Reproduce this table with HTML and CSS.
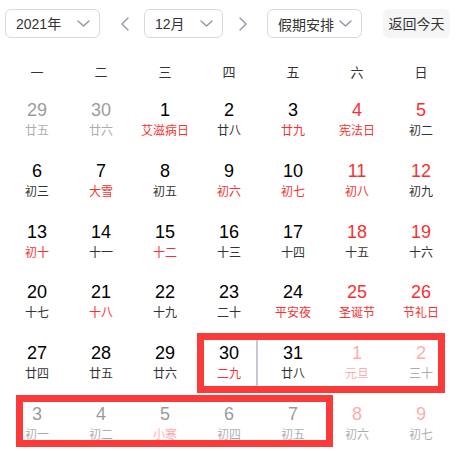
FILE: index.html
```html
<!DOCTYPE html>
<html lang="zh-CN">
<head>
<meta charset="utf-8">
<title>万年历</title>
<link rel="stylesheet" href="styles.css">
</head>
<body>
<div class="cal">
  <div class="toolbar">
    <div class="select year"><span>2021年</span><svg class="chev" width="13" height="7" viewBox="0 0 13 7"><path d="M1 1 L6.5 6 L12 1" /></svg></div>
    <div class="arrow prev"><svg width="8" height="14" viewBox="0 0 8 14"><path d="M7 1 L1 7 L7 13" /></svg></div>
    <div class="select month"><span>12月</span><svg class="chev" width="13" height="7" viewBox="0 0 13 7"><path d="M1 1 L6.5 6 L12 1" /></svg></div>
    <div class="arrow next"><svg width="8" height="14" viewBox="0 0 8 14"><path d="M1 1 L7 7 L1 13" /></svg></div>
    <div class="select holiday"><span>假期安排</span><svg class="chev" width="13" height="7" viewBox="0 0 13 7"><path d="M1 1 L6.5 6 L12 1" /></svg></div>
    <div class="today-btn">返回今天</div>
  </div>

  <div class="weekdays">
    <span>一</span><span>二</span><span>三</span><span>四</span><span>五</span><span>六</span><span>日</span>
  </div>

  <div class="grid">
    <div class="cell other"><b>29</b><i>廿五</i></div>
    <div class="cell other"><b>30</b><i>廿六</i></div>
    <div class="cell"><b>1</b><i class="lr">艾滋病日</i></div>
    <div class="cell"><b>2</b><i>廿八</i></div>
    <div class="cell"><b>3</b><i class="lr">廿九</i></div>
    <div class="cell we"><b>4</b><i class="lr">宪法日</i></div>
    <div class="cell we"><b>5</b><i>初二</i></div>

    <div class="cell"><b>6</b><i>初三</i></div>
    <div class="cell"><b>7</b><i class="lr">大雪</i></div>
    <div class="cell"><b>8</b><i>初五</i></div>
    <div class="cell"><b>9</b><i class="lr">初六</i></div>
    <div class="cell"><b>10</b><i class="lr">初七</i></div>
    <div class="cell we"><b>11</b><i class="lr">初八</i></div>
    <div class="cell we"><b>12</b><i>初九</i></div>

    <div class="cell"><b>13</b><i class="lr">初十</i></div>
    <div class="cell"><b>14</b><i>十一</i></div>
    <div class="cell"><b>15</b><i class="lr">十二</i></div>
    <div class="cell"><b>16</b><i>十三</i></div>
    <div class="cell"><b>17</b><i>十四</i></div>
    <div class="cell we"><b>18</b><i>十五</i></div>
    <div class="cell we"><b>19</b><i>十六</i></div>

    <div class="cell"><b>20</b><i>十七</i></div>
    <div class="cell"><b>21</b><i class="lr">十八</i></div>
    <div class="cell"><b>22</b><i>十九</i></div>
    <div class="cell"><b>23</b><i>二十</i></div>
    <div class="cell"><b>24</b><i class="lr">平安夜</i></div>
    <div class="cell we"><b>25</b><i class="lr">圣诞节</i></div>
    <div class="cell we"><b>26</b><i class="lr">节礼日</i></div>

    <div class="cell"><b>27</b><i>廿四</i></div>
    <div class="cell"><b>28</b><i>廿五</i></div>
    <div class="cell"><b>29</b><i>廿六</i></div>
    <div class="cell sel"><b>30</b><i class="lr">二九</i></div>
    <div class="cell"><b>31</b><i>廿八</i></div>
    <div class="cell other we"><b>1</b><i class="lr">元旦</i></div>
    <div class="cell other we"><b>2</b><i>三十</i></div>

    <div class="cell other"><b>3</b><i>初一</i></div>
    <div class="cell other"><b>4</b><i>初二</i></div>
    <div class="cell other"><b>5</b><i class="lr">小寒</i></div>
    <div class="cell other"><b>6</b><i>初四</i></div>
    <div class="cell other"><b>7</b><i>初五</i></div>
    <div class="cell other we"><b>8</b><i>初六</i></div>
    <div class="cell other we"><b>9</b><i>初七</i></div>
  </div>

  <div class="mark mark-a"></div>
  <div class="mark mark-b"></div>
</div>
</body>
</html>
```

FILE: styles.css
```css
* { box-sizing: border-box; }

html, body {
  margin: 0;
  padding: 0;
  background: #fff;
}

body {
  font-family: "Noto Sans CJK SC", "Noto Sans", sans-serif;
  color: #333;
}

.cal {
  position: relative;
  width: 461px;
  height: 451px;
  padding: 9px 0 0 5px;
}

.toolbar {
  display: flex;
  align-items: center;
  height: 29px;
}

.select {
  display: flex;
  align-items: center;
  justify-content: space-between;
  height: 29px;
  padding: 0 9px 0 10px;
  border: 1px solid #d7d9e0;
  border-radius: 6px;
  font-size: 14px;
  color: #333;
  line-height: 1;
}

.select span { font-family: "Liberation Sans", "Noto Sans CJK SC", sans-serif; }
.holiday span { font-family: "Noto Sans CJK SC", sans-serif; }

.year { width: 95px; }
.month { width: 79px; margin-left: 7px; }
.holiday { width: 95px; margin-left: 12px; padding-left: 10px; }

.chev path, .arrow path {
  fill: none;
  stroke: #9195a3;
  stroke-width: 1.4;
  stroke-linecap: round;
  stroke-linejoin: round;
}

.arrow {
  width: 24px;
  height: 29px;
  display: flex;
  align-items: center;
  justify-content: center;
}
.prev { margin-left: 13px; }
.next { margin-left: 8px; }

.today-btn {
  width: 67px;
  height: 29px;
  margin-left: 21px;
  border-radius: 6px;
  background: #f5f5f6;
  font-size: 14px;
  line-height: 29px;
  text-align: center;
  color: #333;
}

.weekdays {
  display: grid;
  grid-template-columns: repeat(7, 64px);
  margin-top: 24px;
  height: 20px;
  line-height: 20px;
  font-size: 13px;
  color: #333;
  text-align: center;
}

.grid {
  display: grid;
  grid-template-columns: repeat(7, 64px);
  grid-auto-rows: 56px;
  row-gap: 4.75px;
  margin-top: 8px;
}

.cell {
  margin: 0 3px;
  border: 2px solid transparent;
  border-radius: 5px;
  padding-top: 6px;
  display: flex;
  flex-direction: column;
  align-items: center;
}

.cell b {
  font-family: "Liberation Sans", Arial, sans-serif;
  font-weight: normal;
  font-size: 18px;
  line-height: 24px;
  color: #000;
}

.cell i {
  font-style: normal;
  font-size: 12px;
  line-height: 16px;
  color: #333;
  white-space: nowrap;
}

.cell.we b { color: #f73131; }
.cell i.lr { color: #f73131; }

.cell.other { opacity: 0.4; }

.cell.sel { border-color: #c4c8d2; }

.mark {
  position: absolute;
  border: 7px solid #fb3a3a;
}

.mark-a {
  left: 197px;
  top: 333px;
  width: 248px;
  height: 60px;
}

.mark-b {
  left: 16px;
  top: 395px;
  width: 317px;
  height: 52px;
}
```
